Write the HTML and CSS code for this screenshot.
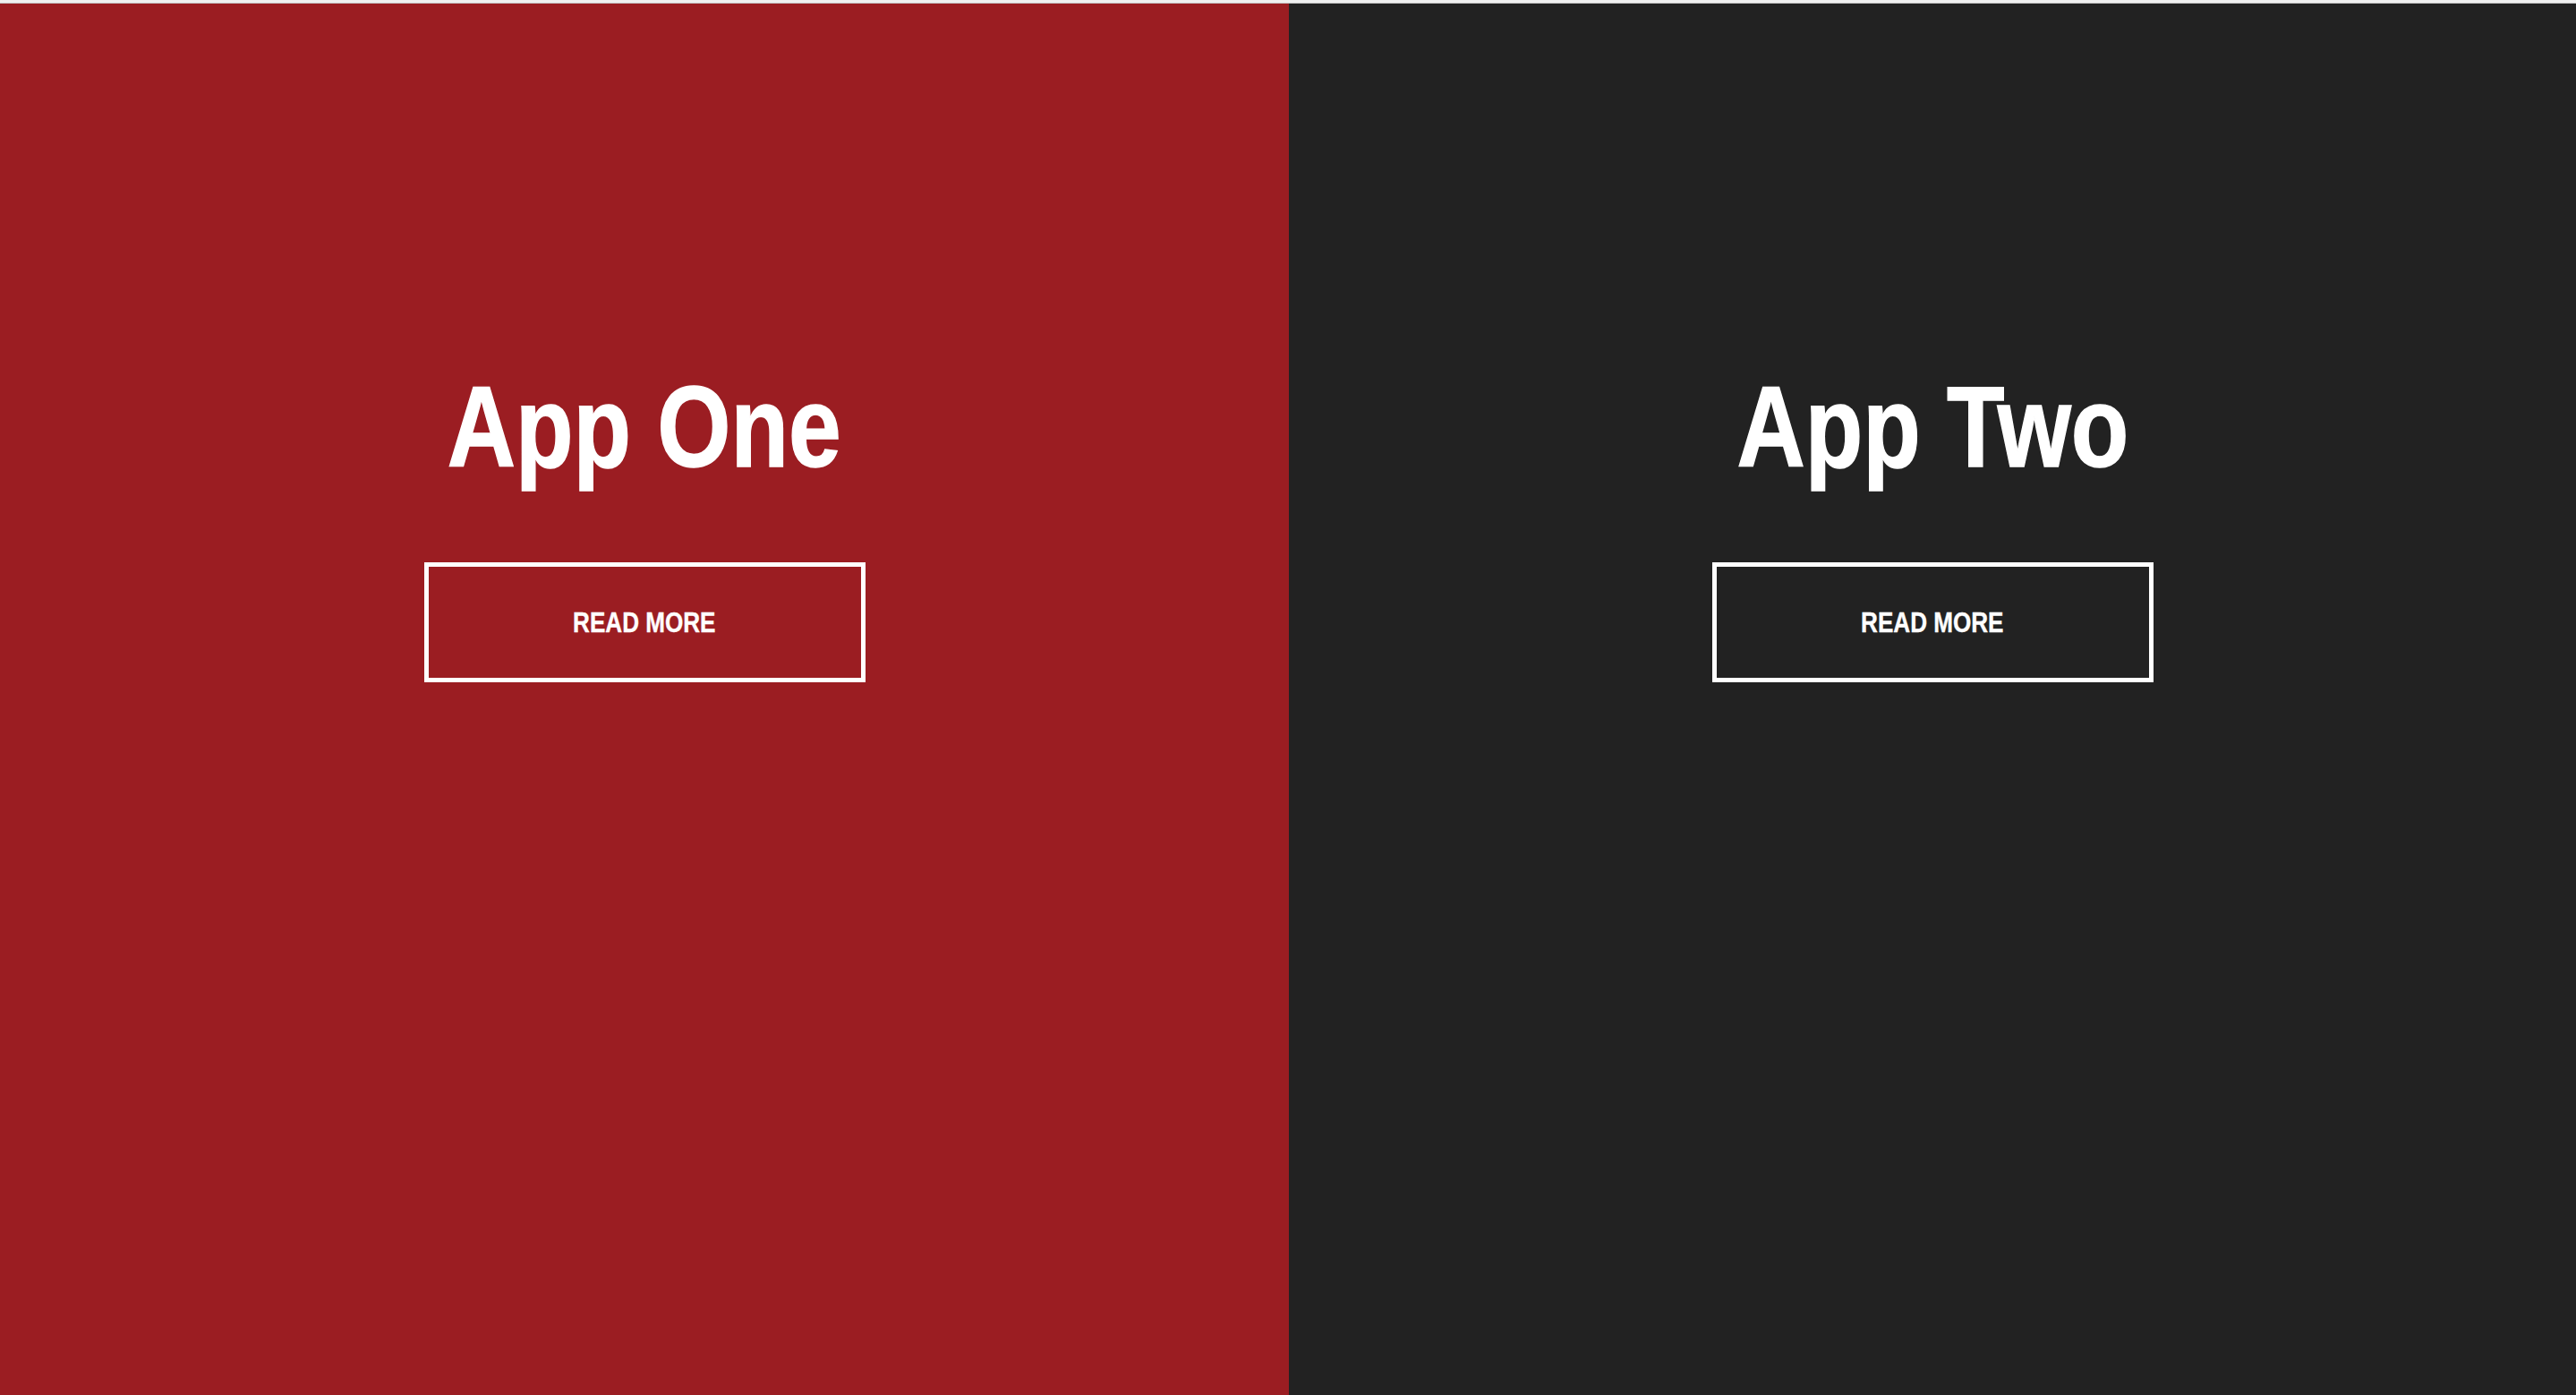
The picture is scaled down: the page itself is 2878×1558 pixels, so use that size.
FILE: index.html
```html
<!DOCTYPE html>
<html lang="en">
<head>
<meta charset="utf-8">
<title>Apps</title>
<link rel="stylesheet" href="styles.css">
</head>
<body>
<div class="topbar"></div>
<main class="split">
  <section class="panel panel-red">
    <h1 class="title"><span class="narrow">App One</span></h1>
    <a class="btn" href="#"><span class="narrow">READ MORE</span></a>
  </section>
  <section class="panel panel-dark">
    <h1 class="title"><span class="narrow">App Two</span></h1>
    <a class="btn" href="#"><span class="narrow">READ MORE</span></a>
  </section>
</main>
</body>
</html>
```

FILE: styles.css
```css
html, body {
  margin: 0;
  padding: 0;
  height: 100%;
}
body {
  font-family: "Liberation Sans", Arial, sans-serif;
  background: #f0f0f0;
  overflow: hidden;
}
.topbar {
  height: 3px;
  background: #f0f0f0;
  border-bottom: 1px solid #c4c4c4;
}
.split {
  display: grid;
  grid-template-columns: 1440px 1fr;
  height: calc(100vh - 4px);
}
.panel {
  display: flex;
  flex-direction: column;
  align-items: center;
  padding-top: 409px;
  box-sizing: border-box;
  color: #ffffff;
}
.panel-red {
  background: #9b1d22;
}
.panel-dark {
  background: #222222;
}
.title {
  margin: 0;
  font-size: 128px;
  line-height: 128px;
  font-weight: 700;
  white-space: nowrap;
  -webkit-text-stroke: 1.5px #ffffff;
}
.title .narrow {
  transform: scaleX(0.825);
}
.narrow {
  display: inline-block;
  transform: scaleX(0.815);
  transform-origin: center;
}
.btn {
  margin-top: 87px;
  width: 493px;
  height: 134px;
  box-sizing: border-box;
  border: 5px solid #ffffff;
  display: flex;
  align-items: center;
  justify-content: center;
  color: #ffffff;
  text-decoration: none;
  font-size: 32px;
  font-weight: 700;
  white-space: nowrap;
  -webkit-text-stroke: 0.4px #ffffff;
}
```
